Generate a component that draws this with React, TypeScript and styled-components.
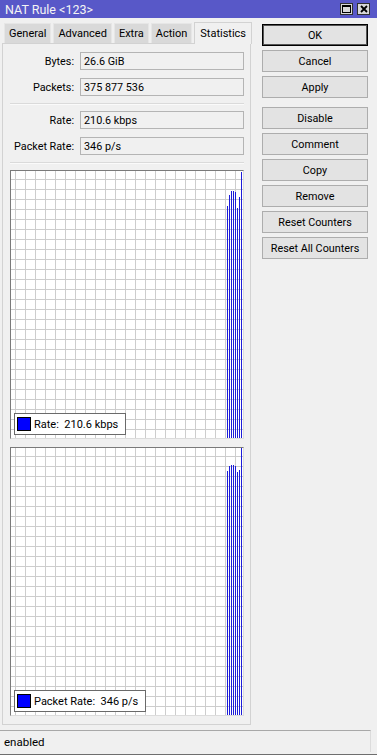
import React from 'react'
import styled, { createGlobalStyle } from 'styled-components'

const GlobalStyle = createGlobalStyle`
    body {
        margin: 0;
        background: #f0f0f0;
        font-family: Roboto, "Liberation Sans", sans-serif;
        font-size: 10.8px;
        color: #000;
    }
    * { box-sizing: border-box; }
`

const Window = styled.div`
    width: 377px;
    height: 755px;
    display: flex;
    flex-direction: column;
    background: #f0f0f0;
    border-bottom: 1px solid #6e6e6e;
`

const TitleBar = styled.div`
    height: 18px;
    flex: none;
    background: #5858c8;
    color: #f4f4f4;
    display: flex;
    align-items: center;
    padding: 0 7px 0 5px;
    font-size: 12.5px;
    & span { flex: 1; }
`

const TitleButton = styled.div`
    width: 13px;
    height: 12px;
    margin-left: 4px;
    background: #d8d8d8;
    border: 1px solid #303030;
    display: flex;
    align-items: center;
    justify-content: center;
`

const Main = styled.div`
    flex: 1;
    display: flex;
    min-height: 0;
`

const LeftSide = styled.div`
    width: 251px;
    padding: 3px 0 5px 2px;
    display: flex;
    flex-direction: column;
`

const TabRow = styled.div`
    height: 22px;
    display: flex;
    align-items: flex-end;
    gap: 2px;
    padding-left: 2px;
`

const Tab = styled.div<{ $active?: boolean }>`
    height: ${p => p.$active ? 22 : 20}px;
    padding: 0 ${p => p.$active ? 5 : 4}px;
    display: flex;
    align-items: center;
    font-size: 11px;
    background: ${p => p.$active ? '#f0f0f0' : '#d9d9d9'};
    border: 1px solid ${p => p.$active ? '#d2d2d2' : '#e6e6e6'};
    border-bottom: none;
    margin-bottom: ${p => p.$active ? -1 : 0}px;
    position: relative;
`

const Panel = styled.div`
    flex: 1;
    border: 1px solid #d2d2d2;
    background: #f0f0f0;
    padding: 8px 6px 6px 7px;
    display: flex;
    flex-direction: column;
`

const FieldRow = styled.div`
    display: flex;
    align-items: center;
    height: 18px;
    margin-bottom: 8px;
`

const Label = styled.div`
    width: 64px;
    text-align: right;
    margin-right: 6px;
    white-space: nowrap;
`

const ValueBox = styled.div`
    flex: 1;
    height: 18px;
    border: 1px solid #b4b4b4;
    background: #f0f0f0;
    padding: 0 3px;
    display: flex;
    align-items: center;
`

const Separator = styled.div`
    height: 2px;
    border-top: 1px solid #dadada;
    border-bottom: 1px solid #fafafa;
    margin: -1px 0 6px;
`

const Graph = styled.div`
    height: 269px;
    flex: none;
    position: relative;
    border: 1px solid;
    border-color: #7a7a7a #dcdcdc #dcdcdc #7a7a7a;
    background-color: #ffffff;
    background-image:
        linear-gradient(to right, #cdcdcd 1px, transparent 1px),
        linear-gradient(to bottom, #cdcdcd 1px, transparent 1px);
    background-size: 10px 10px;
    background-position: 4px 8px;
    display: flex;
    justify-content: flex-end;
    align-items: flex-end;
    gap: 1px;
    padding-right: 1px;
    & + & { margin-top: 8px; }
`

const Bar = styled.div`
    flex: none;
    width: 1px;
    background: #1c1cd8;
`

const Legend = styled.div`
    position: absolute;
    left: 3px;
    bottom: 3px;
    height: 22px;
    background: #fff;
    border: 1px solid #6a6a6a;
    display: flex;
    align-items: center;
    padding: 0 7px 0 2px;
    gap: 3px;
    white-space: pre;
    font-size: 11px;
`

const Swatch = styled.div`
    width: 14px;
    height: 14px;
    background: #0000ff;
    border: 1px solid #000;
`

const ButtonColumn = styled.div`
    width: 106px;
    margin-left: 11px;
    padding-top: 6px;
    display: flex;
    flex-direction: column;
    gap: 4px;
`

const Button = styled.div<{ $primary?: boolean; $spaced?: boolean }>`
    height: 22px;
    display: flex;
    align-items: center;
    justify-content: center;
    background: #e3e3e3;
    border: 1px solid ${p => p.$primary ? '#000' : '#adadad'};
    box-shadow: ${p => p.$primary ? 'inset 0 0 0 1px #555' : 'none'};
    margin-top: ${p => p.$spaced ? 5 : 0}px;
    white-space: nowrap;
`

const StatusBar = styled.div`
    height: 22px;
    flex: none;
    width: 371px;
    border-top: 1px solid #a8a8a8;
    border-right: 1px solid #dcdcdc;
    display: flex;
    align-items: center;
    padding-left: 4px;
    font-size: 11.5px;
    margin-bottom: 2px;
`

const tabs = ['General', 'Advanced', 'Extra', 'Action', 'Statistics']
const buttons = ['OK', 'Cancel', 'Apply', 'Disable', 'Comment', 'Copy', 'Remove', 'Reset Counters', 'Reset All Counters']

const rateBars = [232, 243, 247, 247, 246, 230, 241, 266]
const packetBars = [244, 249, 250, 250, 249, 243, 245, 267]

const App: React.FC = () => {
    return (
        <Window>
            <GlobalStyle />
            <TitleBar>
                <span>NAT Rule &lt;123&gt;</span>
                <TitleButton>
                    <svg width="9" height="8" viewBox="0 0 9 8">
                        <rect x="0.5" y="0.5" width="8" height="7" fill="none" stroke="#000" />
                        <line x1="0" y1="1.5" x2="9" y2="1.5" stroke="#000" />
                    </svg>
                </TitleButton>
                <TitleButton>
                    <svg width="8" height="8" viewBox="0 0 8 8">
                        <path d="M1 1 L7 7 M7 1 L1 7" stroke="#000" strokeWidth="1.8" />
                    </svg>
                </TitleButton>
            </TitleBar>
            <Main>
                <LeftSide>
                    <TabRow>
                        {tabs.map(t => <Tab key={t} $active={t === 'Statistics'}>{t}</Tab>)}
                    </TabRow>
                    <Panel>
                        <FieldRow><Label>Bytes:</Label><ValueBox>26.6 GiB</ValueBox></FieldRow>
                        <FieldRow><Label>Packets:</Label><ValueBox>375 877 536</ValueBox></FieldRow>
                        <Separator />
                        <FieldRow><Label>Rate:</Label><ValueBox>210.6 kbps</ValueBox></FieldRow>
                        <FieldRow><Label>Packet Rate:</Label><ValueBox>346 p/s</ValueBox></FieldRow>
                        <Separator />
                        <Graph>
                            {rateBars.map((h, i) => <Bar key={i} style={{ height: h }} />)}
                            <Legend><Swatch />{'Rate:  210.6 kbps'}</Legend>
                        </Graph>
                        <Graph>
                            {packetBars.map((h, i) => <Bar key={i} style={{ height: h }} />)}
                            <Legend><Swatch />{'Packet Rate:  346 p/s'}</Legend>
                        </Graph>
                    </Panel>
                </LeftSide>
                <ButtonColumn>
                    {buttons.map(b => (
                        <Button key={b} $primary={b === 'OK'} $spaced={b === 'Disable'}>{b}</Button>
                    ))}
                </ButtonColumn>
            </Main>
            <StatusBar>enabled</StatusBar>
        </Window>
    )
}

export default App
